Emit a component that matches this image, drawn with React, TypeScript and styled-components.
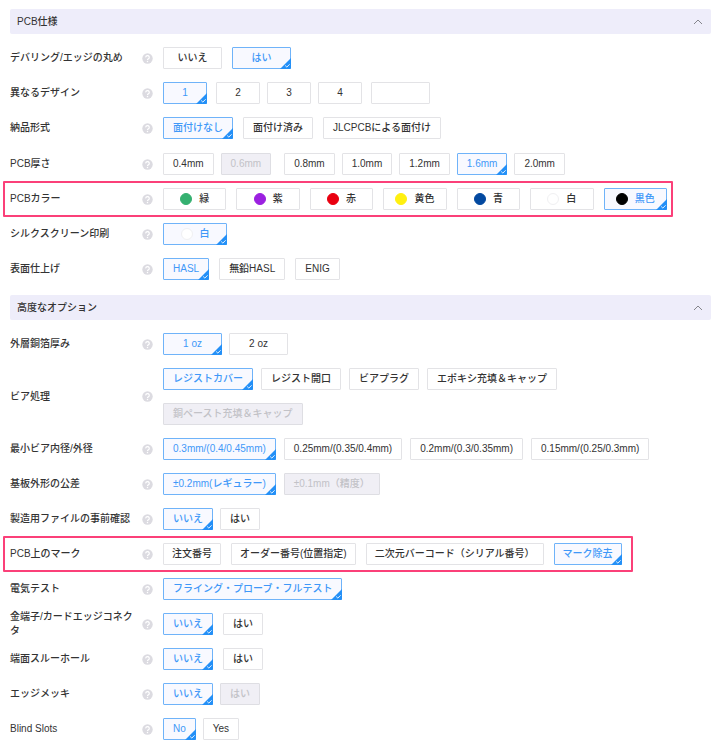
import React, { useState } from 'react';
import styled, { createGlobalStyle, css } from 'styled-components';

const GlobalStyle = createGlobalStyle`
  *, *::before, *::after { box-sizing: border-box; }
  body {
    margin: 0;
    background: #fff;
    color: #333;
    font-family: "Liberation Sans", "Noto Sans CJK JP", sans-serif;
    font-size: 10px;
    font-weight: 500;
    line-height: 14px;
  }
`;

const Page = styled.main`
  padding: 9px 9px 5px 10px;
`;

const Section = styled.section`
  & + & { margin-top: 15px; }
`;

const SectionHeader = styled.h2`
  margin: 0;
  font: inherit;
`;

const SectionToggle = styled.button`
  display: flex;
  align-items: center;
  justify-content: space-between;
  width: 100%;
  height: 25px;
  padding: 0 8px 0 7px;
  border: 0;
  border-radius: 2px;
  background: #eeedfa;
  color: #333;
  font: inherit;
  cursor: pointer;
`;

const Chevron = styled.svg<{ $open: boolean }>`
  width: 10px;
  height: 10px;
  transform: ${(p) => (p.$open ? 'none' : 'rotate(180deg)')};
`;

const Groups = styled.div`
  display: grid;
  gap: 14px;
  padding-top: 13px;
`;

const Group = styled.div`
  display: grid;
  gap: 13px;
`;

const Row = styled.div<{ $mark?: 'snug' | 'loose' }>`
  display: grid;
  grid-template-columns: 132px 11px minmax(0, 1fr);
  align-items: center;
  min-height: 22px;
  ${(p) =>
    p.$mark &&
    css`
      position: relative;
      width: fit-content;
      grid-template-columns: 132px 11px auto;
      &::after {
        content: '';
        position: absolute;
        inset: -7px ${p.$mark === 'snug' ? '-6px' : '-11px'} -7px -7px;
        border: 2px solid #fb4079;
        border-radius: 1px;
        pointer-events: none;
      }
    `}
`;

const RowLabel = styled.span`
  padding-right: 4px;
  margin-block: -3px;
`;

const Help = styled.button`
  display: block;
  width: 11px;
  height: 11px;
  padding: 0;
  border: 0;
  background: none;
  cursor: help;
  svg { display: block; }
`;

const Options = styled.div<{ $gap: number; $swatches?: boolean; $marked?: boolean }>`
  display: flex;
  flex-wrap: wrap;
  gap: 13px ${(p) => p.$gap}px;
  padding: 0 ${(p) => (p.$marked ? 0 : 20)}px 0 10px;
  ${(p) =>
    p.$swatches &&
    css`
      display: grid;
      grid-template-columns: repeat(7, 1fr);
      width: 514px;
    `}
`;

const Option = styled.label<{ $tight?: boolean; $min?: number; $lead?: number; $off?: boolean }>`
  position: relative;
  display: inline-flex;
  align-items: center;
  justify-content: center;
  height: 22px;
  min-width: ${(p) => p.$min ?? 0}px;
  margin-left: ${(p) => p.$lead ?? 0}px;
  padding: 0 ${(p) => (p.$tight ? 8 : 9)}px;
  border: 1px solid #e3e3e6;
  border-radius: 1px;
  background: #fff;
  white-space: nowrap;
  cursor: pointer;

  &:has(input:checked) {
    border-color: #6fb3f9;
    background: #f8f9ff;
    color: #3f98f8;
  }
  &:has(input:focus-visible) { box-shadow: 0 0 0 2px #cfe4fd; }

  ${(p) =>
    p.$off &&
    css`
      border-color: #dedee3;
      background: #f0eff5;
      color: #c2c2c7;
      cursor: not-allowed;
    `}
`;

const Radio = styled.input`
  position: absolute;
  inset: 0;
  margin: 0;
  opacity: 0;
  cursor: inherit;
`;

const Corner = styled.svg`
  position: absolute;
  right: -1px;
  bottom: -1px;
  width: 11px;
  height: 11px;
  pointer-events: none;
`;

const Swatch = styled.span<{ $color: string }>`
  width: 12px;
  height: 12px;
  margin-right: 7px;
  border: 1px solid ${(p) => (p.$color === '#ffffff' ? '#f0f0f2' : p.$color)};
  border-radius: 50%;
  background: ${(p) => p.$color};
`;

const CountInput = styled.input`
  width: 59px;
  height: 22px;
  margin-left: 2px;
  padding: 0 8px;
  border: 1px solid #e3e3e6;
  border-radius: 1px;
  background: #fff;
  color: #333;
  font: inherit;
  outline-color: #6fb3f9;
`;

type Choice = { text: string; color?: string; off?: boolean; lead?: number };
type Field = {
  id: string;
  label: string;
  value: string;
  gap: number;
  min?: number;
  tight?: boolean;
  mark?: 'snug' | 'loose';
  custom?: boolean;
  swatches?: boolean;
  choices: Choice[];
};

const list = (...texts: string[]): Choice[] => texts.map((text) => ({ text }));

const specGroups: Field[][] = [
  [
    { id: 'deburr', label: 'デバリング/エッジの丸め', value: 'はい', gap: 10, min: 59, choices: list('いいえ', 'はい') },
    {
      id: 'designs', label: '異なるデザイン', value: '1', gap: 7, min: 44, custom: true,
      choices: [{ text: '1' }, { text: '2', lead: 2 }, { text: '3' }, { text: '4' }],
    },
    {
      id: 'delivery', label: '納品形式', value: '面付けなし', gap: 10,
      choices: list('面付けなし', '面付け済み', 'JLCPCBによる面付け'),
    },
  ],
  [
    {
      id: 'thickness', label: 'PCB厚さ', value: '1.6mm', gap: 7,
      choices: [
        { text: '0.4mm' }, { text: '0.6mm', off: true }, { text: '0.8mm', lead: 6 },
        { text: '1.0mm' }, { text: '1.2mm' }, { text: '1.6mm' }, { text: '2.0mm' },
      ],
    },
    {
      id: 'color', label: 'PCBカラー', value: '黒色', gap: 10, mark: 'snug', swatches: true,
      choices: [
        { text: '緑', color: '#35b070' }, { text: '紫', color: '#9b20e0' },
        { text: '赤', color: '#e90010' }, { text: '黄色', color: '#fff010' },
        { text: '青', color: '#0349a0' }, { text: '白', color: '#ffffff' },
        { text: '黒色', color: '#000000' },
      ],
    },
    { id: 'silk', label: 'シルクスクリーン印刷', value: '白', gap: 10, min: 64, choices: [{ text: '白', color: '#ffffff' }] },
    { id: 'finish', label: '表面仕上げ', value: 'HASL', gap: 10, choices: list('HASL', '無鉛HASL', 'ENIG') },
  ],
];

const advancedGroups: Field[][] = [
  [
    { id: 'copper', label: '外層銅箔厚み', value: '1 oz', gap: 7, min: 59, choices: list('1 oz', '2 oz') },
    {
      id: 'via', label: 'ビア処理', value: 'レジストカバー', gap: 8,
      choices: [
        ...list('レジストカバー', 'レジスト開口', 'ビアプラグ', 'エポキシ充填＆キャップ'),
        { text: '銅ペースト充填＆キャップ', off: true },
      ],
    },
    {
      id: 'hole', label: '最小ビア内径/外径', value: '0.3mm/(0.4/0.45mm)', gap: 8,
      choices: list('0.3mm/(0.4/0.45mm)', '0.25mm/(0.35/0.4mm)', '0.2mm/(0.3/0.35mm)', '0.15mm/(0.25/0.3mm)'),
    },
    {
      id: 'tolerance', label: '基板外形の公差', value: '±0.2mm(レギュラー)', gap: 8,
      choices: [{ text: '±0.2mm(レギュラー)' }, { text: '±0.1mm（精度）', off: true }],
    },
    { id: 'confirm', label: '製造用ファイルの事前確認', value: 'いいえ', gap: 7, choices: list('いいえ', 'はい') },
    {
      id: 'marking', label: 'PCB上のマーク', value: 'マーク除去', gap: 10, tight: true, mark: 'loose',
      choices: list('注文番号', 'オーダー番号(位置指定)', '二次元バーコード（シリアル番号）', 'マーク除去'),
    },
    {
      id: 'etest', label: '電気テスト', value: 'フライング・プローブ・フルテスト', gap: 8,
      choices: list('フライング・プローブ・フルテスト'),
    },
    { id: 'gold', label: '金端子/カードエッジコネクタ', value: 'いいえ', gap: 10, choices: list('いいえ', 'はい') },
    { id: 'castellated', label: '端面スルーホール', value: 'いいえ', gap: 10, choices: list('いいえ', 'はい') },
    {
      id: 'plating', label: 'エッジメッキ', value: 'いいえ', gap: 7,
      choices: [{ text: 'いいえ' }, { text: 'はい', off: true }],
    },
    { id: 'slots', label: 'Blind Slots', value: 'No', gap: 7, choices: list('No', 'Yes') },
  ],
];

function FieldRow({ field }: { field: Field }) {
  const [value, setValue] = useState(field.value);
  const labelId = `${field.id}-label`;
  return (
    <Row $mark={field.mark}>
      <RowLabel id={labelId}>{field.label}</RowLabel>
      <Help type="button" aria-label={`${field.label} ヘルプ`}>
        <svg width="11" height="11" viewBox="0 0 11 11" fill="none" aria-hidden="true">
          <circle cx="5.5" cy="5.5" r="5.2" fill="#dcdbe1" />
          <path
            d="M3.7 4.4a1.8 1.7 0 1 1 2.7 1.4c-.6.4-.9.6-.9 1.2"
            stroke="#fff"
            strokeWidth="1.2"
          />
          <circle cx="5.5" cy="8.5" r=".75" fill="#fff" />
        </svg>
      </Help>
      <Options
        role="radiogroup"
        aria-labelledby={labelId}
        $gap={field.gap}
        $swatches={field.swatches}
        $marked={Boolean(field.mark)}
      >
        {field.choices.map((c) => (
          <Option key={c.text} $min={field.min} $tight={field.tight} $lead={c.lead} $off={c.off}>
            <Radio
              type="radio"
              name={field.id}
              value={c.text}
              checked={value === c.text}
              disabled={c.off}
              onChange={() => setValue(c.text)}
            />
            {c.color && <Swatch $color={c.color} />}
            {c.text}
            {value === c.text && (
              <Corner viewBox="0 0 11 11" fill="none" aria-hidden="true">
                <path d="M11 0v10a1 1 0 0 1-1 1H0z" fill="#2490f7" />
                <path d="M5.2 7.5l1.6 1.6 2.8-2.8" stroke="#fff" strokeWidth=".9" />
              </Corner>
            )}
          </Option>
        ))}
        {field.custom && <CountInput type="text" aria-label={field.label} />}
      </Options>
    </Row>
  );
}

function SpecSection({ title, groups }: { title: string; groups: Field[][] }) {
  const [open, setOpen] = useState(true);
  return (
    <Section>
      <SectionHeader>
        <SectionToggle type="button" aria-expanded={open} onClick={() => setOpen(!open)}>
          {title}
          <Chevron $open={open} viewBox="0 0 10 10" fill="none" aria-hidden="true">
            <path d="M1 7l4-4 4 4" stroke="#85858c" strokeWidth="1" />
          </Chevron>
        </SectionToggle>
      </SectionHeader>
      {open && (
        <Groups>
          {groups.map((rows) => (
            <Group key={rows[0].id}>
              {rows.map((field) => (
                <FieldRow key={field.id} field={field} />
              ))}
            </Group>
          ))}
        </Groups>
      )}
    </Section>
  );
}

export default function App() {
  return (
    <>
      <GlobalStyle />
      <Page>
        <SpecSection title="PCB仕様" groups={specGroups} />
        <SpecSection title="高度なオプション" groups={advancedGroups} />
      </Page>
    </>
  );
}
